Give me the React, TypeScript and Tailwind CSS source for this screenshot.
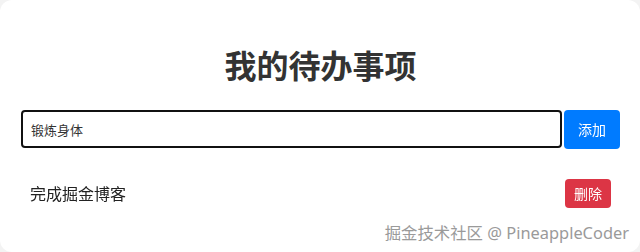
import React, { useState } from 'react';

const font = { fontFamily: '"Noto Sans", "Noto Sans CJK SC", sans-serif' };

type Todo = { id: number; text: string };

const App = () => {
  const [value, setValue] = useState<string>('锻炼身体');
  const [todos, setTodos] = useState<Todo[]>([{ id: 1, text: '完成掘金博客' }]);

  const addTodo = (): void => {
    if (!value.trim()) return;
    setTodos([...todos, { id: Date.now(), text: value.trim() }]);
    setValue('');
  };

  const removeTodo = (id: number): void => {
    setTodos(todos.filter((t) => t.id !== id));
  };

  return (
    <div className="h-[252px] w-full bg-[#f3f3f3] font-['Noto_Sans','Noto_Sans_CJK_SC',sans-serif]" style={font}>
      <div className="relative h-full w-full rounded-[12px] bg-white pl-[21px] pr-[20px] pt-[46px]">
        <h1 className="mb-[24px] text-center text-[32px] font-bold leading-[40px] text-[#333]">我的待办事项</h1>

        {/* Input row */}
        <div className="flex h-[39px] items-stretch">
          <input
            value={value}
            onChange={(e) => setValue(e.target.value)}
            autoFocus
            className="h-[38px] flex-1 rounded-[4px] border-2 border-[#111] px-[8px] text-[13px] text-[#333] outline-none"
          />
          <button
            onClick={addTodo}
            className="ml-[2px] w-[56px] rounded-[4px] bg-[#007bff] text-[14px] text-white"
          >
            添加
          </button>
        </div>

        {/* List */}
        <ul className="mt-[20px]">
          {todos.map((todo) => (
            <li key={todo.id} className="flex items-center justify-between px-[9px] py-[10px]">
              <span className="text-[16px] text-[#222]">{todo.text}</span>
              <button
                onClick={() => removeTodo(todo.id)}
                className="h-[29px] w-[46px] rounded-[4px] bg-[#dc3545] text-[14px] text-white"
              >
                删除
              </button>
            </li>
          ))}
        </ul>

        <div className="absolute bottom-[9px] right-[11px] text-[16.4px] leading-[20px] text-[#9a9a9a]">
          掘金技术社区 @ PineappleCoder
        </div>
      </div>
    </div>
  );
};

export default App;
